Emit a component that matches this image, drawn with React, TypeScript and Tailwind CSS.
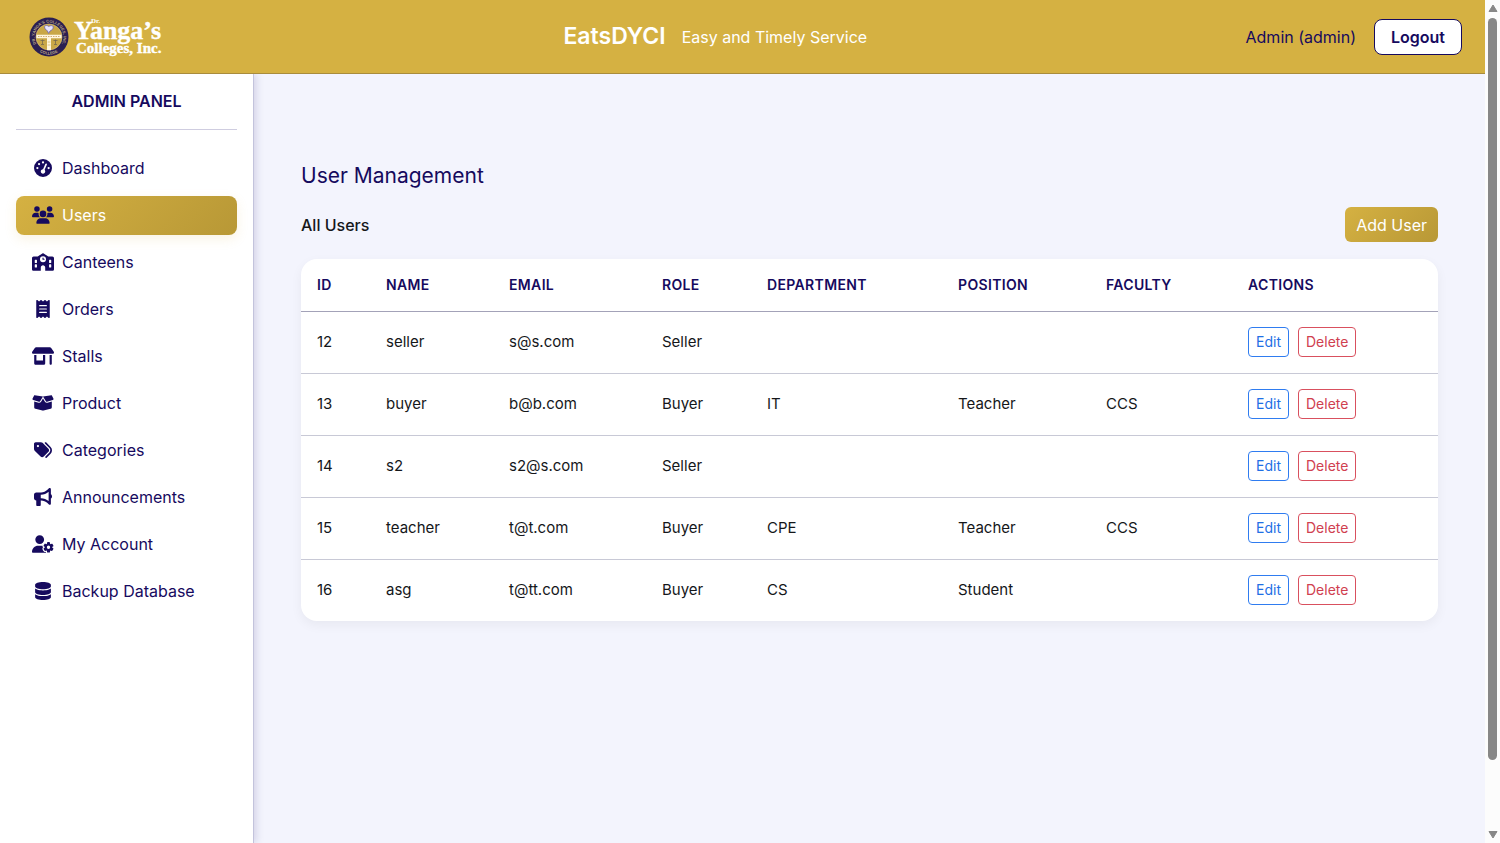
import type { IconType } from 'react-icons';
import {
  FaBoxOpen,
  FaBullhorn,
  FaDatabase,
  FaGaugeHigh,
  FaReceipt,
  FaSchool,
  FaShop,
  FaTags,
  FaUserGear,
  FaUsers,
} from 'react-icons/fa6';

interface User {
  id: number;
  name: string;
  email: string;
  role: string;
  department?: string;
  position?: string;
  faculty?: string;
}

const users: User[] = [
  { id: 12, name: 'seller', email: 's@s.com', role: 'Seller' },
  { id: 13, name: 'buyer', email: 'b@b.com', role: 'Buyer', department: 'IT', position: 'Teacher', faculty: 'CCS' },
  { id: 14, name: 's2', email: 's2@s.com', role: 'Seller' },
  { id: 15, name: 'teacher', email: 't@t.com', role: 'Buyer', department: 'CPE', position: 'Teacher', faculty: 'CCS' },
  { id: 16, name: 'asg', email: 't@tt.com', role: 'Buyer', department: 'CS', position: 'Student' },
];

const navItems: { label: string; icon: IconType }[] = [
  { label: 'Dashboard', icon: FaGaugeHigh },
  { label: 'Users', icon: FaUsers },
  { label: 'Canteens', icon: FaSchool },
  { label: 'Orders', icon: FaReceipt },
  { label: 'Stalls', icon: FaShop },
  { label: 'Product', icon: FaBoxOpen },
  { label: 'Categories', icon: FaTags },
  { label: 'Announcements', icon: FaBullhorn },
  { label: 'My Account', icon: FaUserGear },
  { label: 'Backup Database', icon: FaDatabase },
];

const columns = [
  { label: 'ID', width: 'w-[69px]' },
  { label: 'Name', width: 'w-[123px]' },
  { label: 'Email', width: 'w-[153px]' },
  { label: 'Role', width: 'w-[105px]' },
  { label: 'Department', width: 'w-[191px]' },
  { label: 'Position', width: 'w-[148px]' },
  { label: 'Faculty', width: 'w-[142px]' },
  { label: 'Actions', width: 'w-[206px]' },
];

function Logo() {
  return (
    <svg viewBox="0 0 156 42" className="h-[42px] w-[156px]" role="img" aria-label="Dr. Yanga's Colleges, Inc.">
      <defs>
        <path id="sealTop" d="M 9 30.3 A 14.4 14.4 0 1 1 31 30.3" />
        <path id="sealBottom" d="M 2.4 21 A 17.6 17.6 0 0 0 37.6 21" />
      </defs>
      <circle cx="20" cy="21" r="19.5" fill="#2b1f52" />
      <circle cx="20" cy="21" r="13" fill="#c9a747" stroke="#e2c878" strokeWidth="0.6" />
      <g fill="#b9a684" fontFamily="Liberation Sans, sans-serif" fontWeight="700" fontSize="4">
        <text>
          <textPath href="#sealTop" startOffset="50%" textAnchor="middle">DR. YANGA'S COLLEGES, INC.</textPath>
        </text>
        <text>
          <textPath href="#sealBottom" startOffset="50%" textAnchor="middle">COLLEGE</textPath>
        </text>
      </g>
      <path d="M7.4 18.8h25.2v3.4H22v12h-4v-12H7.4z" fill="#fff6dd" />
      <path d="M9 20.5h22" stroke="#c79a5a" strokeWidth="0.8" strokeDasharray="1.5 1" />
      <path d="M18.6 26h2.8M18.6 29h2.8" stroke="#c9a747" strokeWidth="0.6" />
      <path d="M15.6 10.6c1.2-1.8 3-1 4.2-.2 1.6-1 3.6-1.2 4.4.4.4 2-1.4 3.4-3.2 4.2l-1.4 2.4-1.2-2.6c-1.6-.8-3-2.2-2.8-4.2z" fill="#e9e6ff" stroke="#6158b0" strokeWidth="0.7" />
      <path d="M11.5 24.5h4M13.5 23.5v4.5M12 28.5h3M24.5 24.5h4M26.5 23.5v5M25 28.5h3" stroke="#75694f" strokeWidth="0.8" fill="none" />
      <g fill="#fff" fontFamily="Liberation Serif, serif" fontWeight="700" stroke="#fff" strokeWidth="0.4">
        <text x="62" y="7" fontSize="7" strokeWidth="0">Dr.</text>
        <text x="45" y="23" fontSize="26">Yanga’s</text>
        <text x="47" y="37" fontSize="15">Colleges, Inc.</text>
      </g>
    </svg>
  );
}

function Header() {
  return (
    <header className="relative z-10 flex h-[74px] items-center justify-between border-b border-[#a98c3c] bg-[#d5b142] pr-[23px] pl-[29px]">
      <a href="#home">
        <Logo />
      </a>
      <div className="flex items-center gap-4 text-white">
        <span className="text-[23px] font-semibold">EatsDYCI</span>
        <span className="text-base">Easy and Timely Service</span>
      </div>
      <div className="flex items-center gap-[18px] text-[#160a5e]">
        <span>Admin (admin)</span>
        <button type="button" className="h-9 rounded-lg border border-[#160a5e] bg-white px-4 font-semibold">
          Logout
        </button>
      </div>
    </header>
  );
}

function Sidebar() {
  return (
    <aside className="w-[254px] shrink-0 border-r border-[#c3c3dc] bg-white px-4 pt-4 shadow-[2px_0_8px_rgba(22,10,94,0.15)]">
      <h2 className="border-b border-[#cfcde0] pb-4 text-center leading-[23px] font-semibold">ADMIN PANEL</h2>
      <nav className="mt-[19px] flex flex-col gap-2">
        {navItems.map(({ label, icon: Icon }) => {
          const active = label === 'Users';
          return (
            <a
              key={label}
              href={`#${label.toLowerCase().replace(' ', '-')}`}
              aria-current={active ? 'page' : undefined}
              className={`flex h-[39px] items-center gap-2 rounded-lg px-4 pb-0.5 ${
                active ? 'bg-linear-135 from-[#d5b142] to-[#b89836] text-white shadow-[0_4px_12px_rgba(213,177,66,0.15)]' : ''
              }`}
            >
              <Icon className="h-[18px] w-[22px] shrink-0 text-[#160a5e]" />
              {label}
            </a>
          );
        })}
      </nav>
    </aside>
  );
}

function UserRow({ user }: { user: User }) {
  return (
    <tr className="h-[62px] border-b border-[#c8c9d6] last:border-b-0">
      <td className="px-4">{user.id}</td>
      <td className="px-4">{user.name}</td>
      <td className="px-4">{user.email}</td>
      <td className="px-4">{user.role}</td>
      <td className="px-4">{user.department}</td>
      <td className="px-4">{user.position}</td>
      <td className="px-4">{user.faculty}</td>
      <td className="px-4">
        <div className="flex gap-[9px]">
          <button type="button" className="h-[30px] rounded border border-[#2f7cf0] px-[7px] text-sm text-[#1f6fe5]">
            Edit
          </button>
          <button type="button" className="h-[30px] rounded border border-[#d9505e] px-[7px] text-sm text-[#d0404f]">
            Delete
          </button>
        </div>
      </td>
    </tr>
  );
}

function UserTable() {
  return (
    <div className="mt-[17px] overflow-hidden rounded-2xl bg-white shadow-[0_4px_12px_rgba(0,0,0,0.05)]">
      <table className="w-full table-fixed border-collapse text-left text-[15px] text-[#15171a]">
        <thead>
          <tr className="h-[52px] border-b border-[#a3a2b8] text-sm text-[#160a5e] uppercase">
            {columns.map((c) => (
              <th key={c.label} scope="col" className={`${c.width} px-4 font-semibold tracking-wide`}>
                {c.label}
              </th>
            ))}
          </tr>
        </thead>
        <tbody>
          {users.map((u) => (
            <UserRow key={u.id} user={u} />
          ))}
        </tbody>
      </table>
    </div>
  );
}

/** Always-visible page scroll track on the right edge. */
function ScrollTrack() {
  return (
    <div className="flex w-[15px] shrink-0 flex-col items-center bg-[#fcfcfc] py-1" aria-hidden="true">
      <svg viewBox="0 0 10 8" className="h-2 w-2.5">
        <path d="M5 1 9 7.5H1z" fill="#878787" stroke="#878787" strokeLinejoin="round" />
      </svg>
      <div className="mt-1.5 mb-[71px] w-[9px] flex-1 rounded-full bg-[#878787]" />
      <svg viewBox="0 0 10 8" className="h-2 w-2.5">
        <path d="M5 7 9 .5H1z" fill="#878787" stroke="#878787" strokeLinejoin="round" />
      </svg>
    </div>
  );
}

export default function App() {
  return (
    <div className="flex min-h-screen font-['Inter',sans-serif] text-base text-[#160a5e]">
      <div className="flex min-w-0 flex-1 flex-col bg-[#f3f4fd]">
        <Header />
        <div className="flex flex-1">
          <Sidebar />
          <main className="min-w-0 flex-1 pt-[86px] pr-[47px] pl-[47px]">
            <h1 className="text-[21px] leading-8">User Management</h1>
            <div className="mt-[15px] flex items-center justify-between">
              <h2 className="font-medium text-[#15171a]">All Users</h2>
              <button
                type="button"
                className="h-[35px] rounded-md bg-linear-135 from-[#d5b142] to-[#b89836] px-[11px] text-white"
              >
                Add User
              </button>
            </div>
            <UserTable />
          </main>
        </div>
      </div>
      <ScrollTrack />
    </div>
  );
}
